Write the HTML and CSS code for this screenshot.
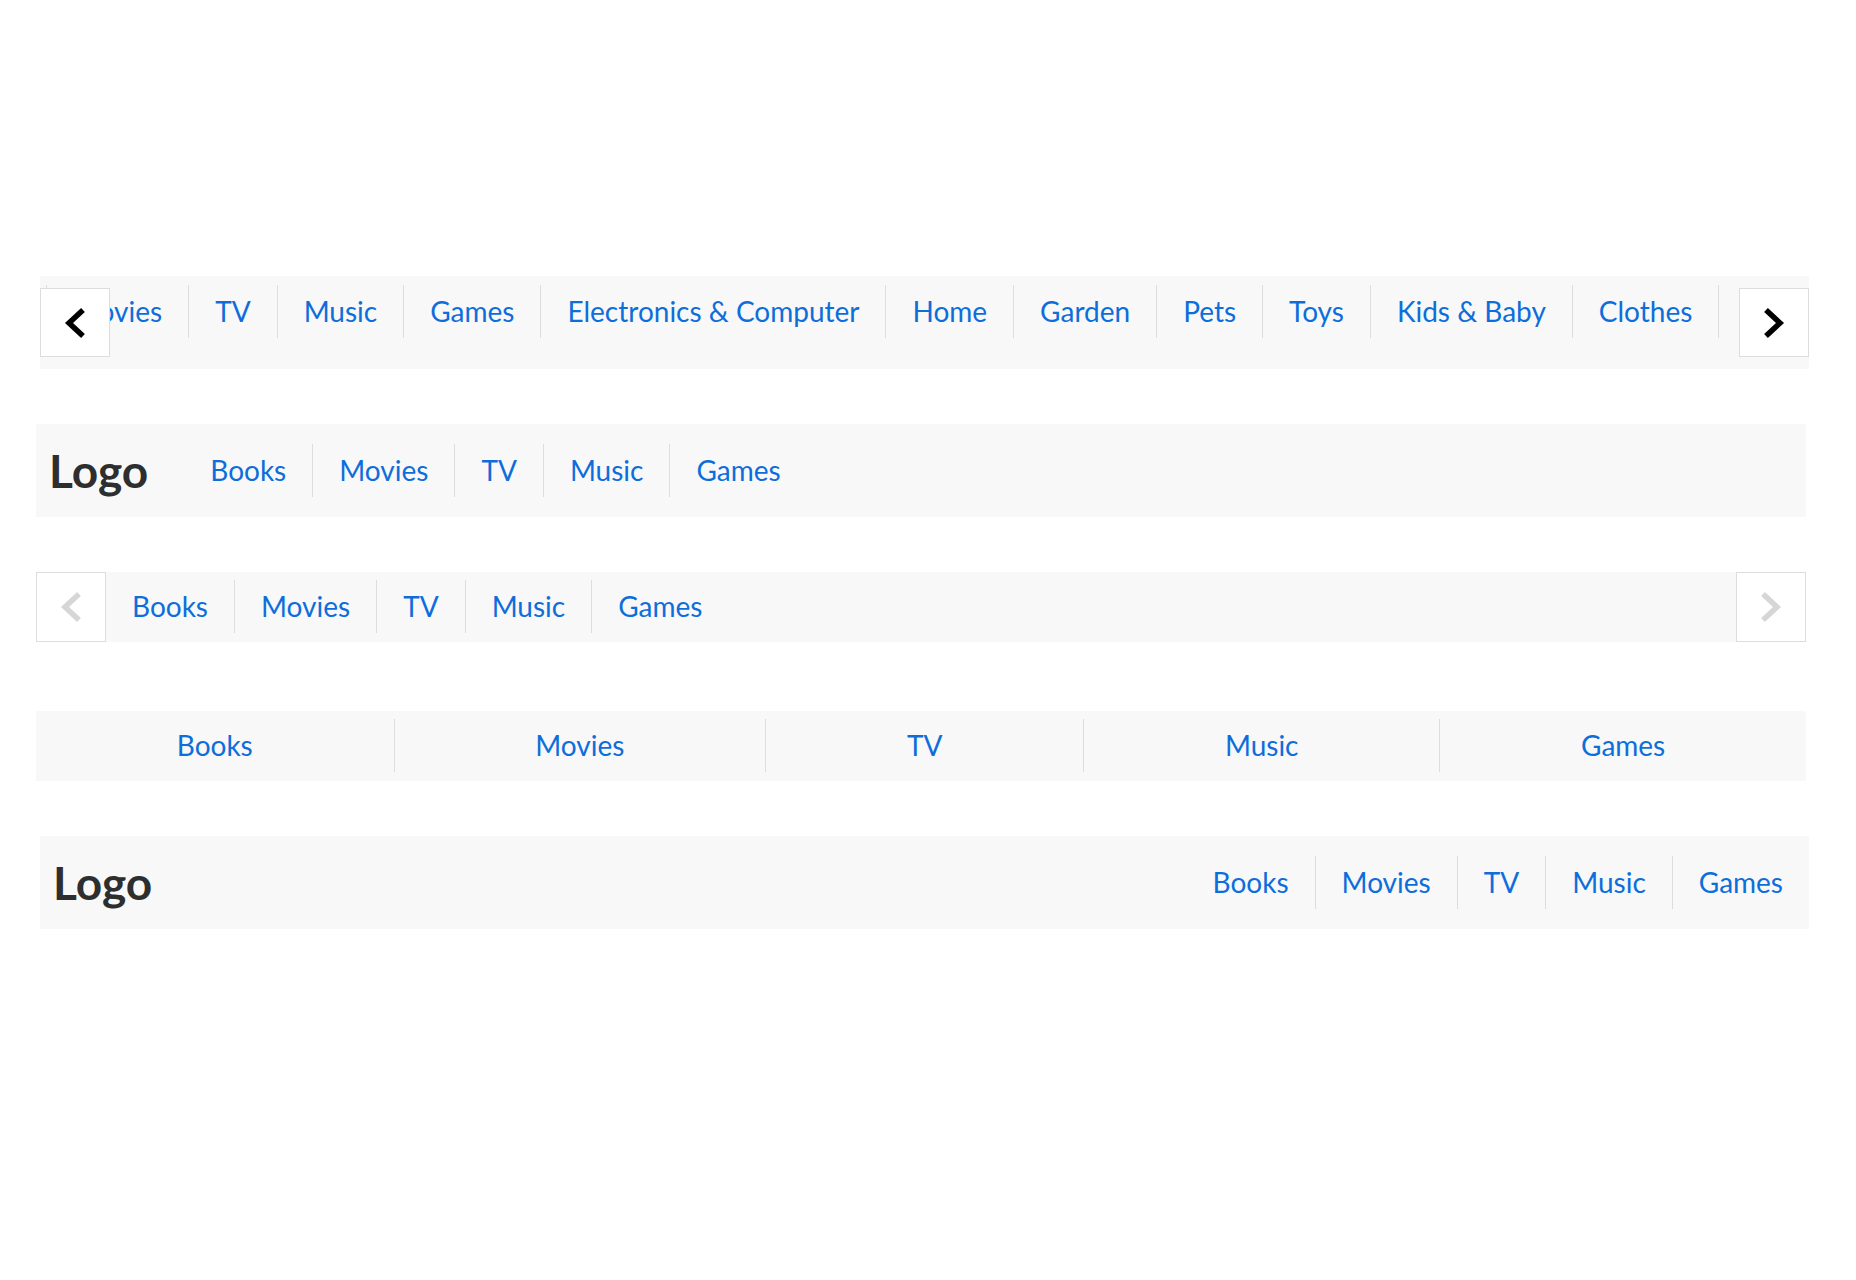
FILE: index.html
```html
<!DOCTYPE html>
<html lang="en">
<head>
  <meta charset="UTF-8">
  <meta name="viewport" content="width=device-width, initial-scale=1.0">
  <title>Navigation Patterns</title>
  <link rel="stylesheet" href="styles.css">
</head>
<body>
  <div class="page">

    <!-- Scrolling nav with overlay arrows -->
    <div class="bar bar-scroll bar-shift">
      <nav class="nav">
        <a href="#">Books</a>
        <a href="#">Movies</a>
        <a href="#">TV</a>
        <a href="#">Music</a>
        <a href="#">Games</a>
        <a href="#">Electronics &amp; Computer</a>
        <a href="#">Home</a>
        <a href="#">Garden</a>
        <a href="#">Pets</a>
        <a href="#">Toys</a>
        <a href="#">Kids &amp; Baby</a>
        <a href="#">Clothes</a>
        <a href="#">Shoes</a>
        <a href="#">Jewellery</a>
      </nav>
      <button class="arrow arrow-float arrow-left" aria-label="Scroll left">
        <svg width="22" height="32" viewBox="0 0 22 32"><polyline points="19,3 5,16 19,29" fill="none" stroke="#000" stroke-width="5.5"/></svg>
      </button>
      <button class="arrow arrow-float arrow-right" aria-label="Scroll right">
        <svg width="22" height="32" viewBox="0 0 22 32"><polyline points="3,3 17,16 3,29" fill="none" stroke="#000" stroke-width="5.5"/></svg>
      </button>
    </div>

    <!-- Logo + nav -->
    <div class="bar bar-logo">
      <div class="logo">Logo</div>
      <nav class="nav">
        <a href="#">Books</a>
        <a href="#">Movies</a>
        <a href="#">TV</a>
        <a href="#">Music</a>
        <a href="#">Games</a>
      </nav>
    </div>

    <!-- Nav between disabled arrows -->
    <div class="bar bar-buttons">
      <button class="arrow arrow-off" aria-label="Scroll left">
        <svg width="22" height="32" viewBox="0 0 22 32"><polyline points="19,3 5,16 19,29" fill="none" stroke="#d6d6d6" stroke-width="5.5"/></svg>
      </button>
      <nav class="nav">
        <a href="#">Books</a>
        <a href="#">Movies</a>
        <a href="#">TV</a>
        <a href="#">Music</a>
        <a href="#">Games</a>
      </nav>
      <button class="arrow arrow-off" aria-label="Scroll right">
        <svg width="22" height="32" viewBox="0 0 22 32"><polyline points="3,3 17,16 3,29" fill="none" stroke="#d6d6d6" stroke-width="5.5"/></svg>
      </button>
    </div>

    <!-- Full width nav -->
    <div class="bar bar-fill">
      <nav class="nav">
        <a href="#">Books</a>
        <a href="#">Movies</a>
        <a href="#">TV</a>
        <a href="#">Music</a>
        <a href="#">Games</a>
      </nav>
    </div>

    <!-- Logo + nav on the right -->
    <div class="bar bar-logo bar-logo-right bar-shift">
      <div class="logo">Logo</div>
      <nav class="nav">
        <a href="#">Books</a>
        <a href="#">Movies</a>
        <a href="#">TV</a>
        <a href="#">Music</a>
        <a href="#">Games</a>
      </nav>
    </div>

  </div>
</body>
</html>
```

FILE: styles.css
```css
body {
  margin: 0;
  font-family: Lato, "Noto Sans", sans-serif;
  background-color: #ffffff;
}

.page {
  padding: 276px 50px 0 36px;
}

/* Shared bar */
.bar {
  display: flex;
  align-items: center;
  background-color: #f8f8f8;
  margin-bottom: 55px;
}

.bar-shift {
  margin-left: 4px;
  margin-right: -3px;
}

.nav {
  display: flex;
}

.nav a {
  flex-shrink: 0;
  padding: 0 26px;
  font-size: 28px;
  line-height: 53px;
  color: #0d6edb;
  text-decoration: none;
  white-space: nowrap;
}

.nav a + a {
  border-left: 1px solid #dddddd;
}

/* Arrow buttons */
.arrow {
  display: flex;
  align-items: center;
  justify-content: center;
  width: 70px;
  padding: 0;
  background-color: #ffffff;
  border: 1px solid #dddddd;
  box-sizing: border-box;
  cursor: pointer;
}

.arrow-float {
  position: absolute;
  top: 12px;
  height: 69px;
}

.arrow-left {
  left: 0;
}

.arrow-right {
  right: 0;
}

/* Scrolling bar */
.bar-scroll {
  position: relative;
  display: block;
  overflow: hidden;
  padding: 9px 0 31px;
}

.bar-scroll .nav {
  transform: translateX(-122px);
}

/* Logo bars */
.bar-logo {
  padding: 20px 0 20px 13px;
}

.logo {
  font-size: 46px;
  font-weight: 700;
  line-height: 53px;
  color: #2e2e2e;
  margin-right: 36px;
}

.bar-logo-right .nav {
  margin-left: auto;
}

/* Arrows either side */
.bar-buttons {
  align-items: stretch;
  margin-bottom: 69px;
}

.bar-buttons .nav {
  flex: 1;
  padding: 8px 0 9px;
}

/* Stretched items */
.bar-fill {
  padding: 8px 0 9px;
}

.bar-fill .nav {
  flex: 1;
}

.bar-fill .nav a {
  flex-grow: 1;
  text-align: center;
}
```
